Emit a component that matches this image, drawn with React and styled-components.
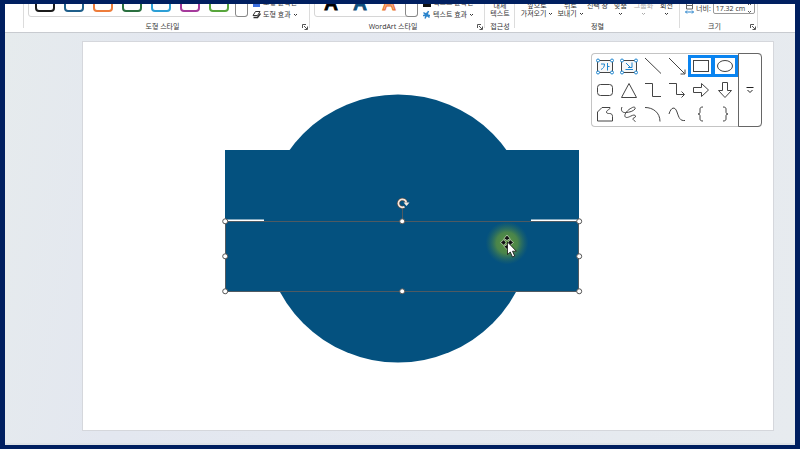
import * as React from 'react'
import styled, { createGlobalStyle } from 'styled-components'

const OUTLINES = ['#1b1b1b', '#1f5f8b', '#ee7d3b', '#2b7040', '#2c9fd6', '#a53a9c', '#58a63c']

const LETTERS = [
  { fill: '#000', stroke: '#000' },
  { fill: '#0f4f7c', stroke: '#0f4f7c' },
  { fill: '#f6b58f', stroke: '#ea6f2a' },
]

const ARRANGE = [
  { lines: ['앞으로', '가져오기'], inline: true, width: 36 },
  { lines: ['뒤로', '보내기'], inline: true, width: 31 },
  { lines: ['선택 창'], width: 23 },
  { lines: ['맞춤'], arrow: true, width: 23 },
  { lines: ['그룹화'], arrow: true, muted: true, width: 23 },
  { lines: ['회전'], arrow: true, width: 23 },
]

const textBox = letter => (
  <>
    <rect x="4.500" y="6.500" width="15" height="12" fill="#f7f7f7" />
    <g stroke="#1f86cf">
      {letter}
      <g fill="#fff">
        <circle cx="5" cy="6.500" r="1.500" />
        <circle cx="19" cy="6.500" r="1.500" />
        <circle cx="5" cy="18.500" r="1.500" />
        <circle cx="19" cy="18.500" r="1.500" />
      </g>
    </g>
  </>
)

const SHAPES = [
  {
    name: '텍스트 상자',
    art: textBox(<path d="M8 10h3.500c0 3-1.500 4.500-3.500 5.500M14.500 9v7.500M14.500 12.500h2" />),
  },
  {
    name: '세로 텍스트 상자',
    art: textBox(<path d="M9 9l4 4M15 8.500v5h-4M8.500 15.500h7.500" />),
  },
  { name: '선', art: <path d="M4 4l16 15.500" /> },
  { name: '화살표', art: <path d="M4 4l15.500 15.500M20 15.500v4.500h-4.500" /> },
  { name: '직사각형', selected: true, art: <rect x="4.500" y="6.500" width="15" height="11" /> },
  { name: '타원', selected: true, art: <ellipse cx="12" cy="12" rx="7.500" ry="5.500" /> },
  { name: '둥근 사각형', art: <rect x="4.500" y="6.500" width="15" height="11" rx="3" /> },
  { name: '삼각형', art: <path d="M12 5.500L19.500 19.500h-15z" /> },
  { name: '꺾인 연결선', art: <path d="M4 5.500h7.500v13H20" /> },
  { name: '꺾인 화살표', art: <path d="M4 5.500h7.500v11H19M16.500 13.500l3 3-3 3" /> },
  { name: '오른쪽 화살표', art: <path d="M4.500 9.500h8v-4l7 6.500-7 6.500v-4h-8z" /> },
  { name: '아래쪽 화살표', art: <path d="M9.500 4.500h5v8h4L12 19.500l-6.500-7h4z" /> },
  {
    name: '자유형',
    art: (
      <path d="M4.500 19V10l4.500-4.500h8c1 1.500-3.500 2.500-3.500 4.500 0 1.500 1.500 1.500 3 1.500 2 0 3 1 3 3V19z" />
    ),
  },
  {
    name: '자유 곡선',
    art: (
      <path d="M5 5c-1.500 3 0 6 3.500 5.500 4 0 8-1.500 9.500-3.500 1-2-1.500-2.500-3.500-1C11 7.500 7 12 8 14.500c1 2 4 .5 6-.5s4-1.500 4.500 0-1.500 1.500-2.500 2.500c-.5 1.500 2 2.500 2.500 3" />
    ),
  },
  { name: '호', art: <path d="M4 5.500c8 0 15 5 15 14" /> },
  { name: '곡선', art: <path d="M4 12c2-7 6-8 8-2s3 9 8 8.500" /> },
  {
    name: '왼쪽 중괄호',
    art: <path d="M14 5c-2 0-3 .5-3 2v3c0 1.200-.5 2-2 2 1.500 0 2 .8 2 2v3c0 1.500 1 2 3 2" />,
  },
  {
    name: '오른쪽 중괄호',
    art: <path d="M10 5c2 0 3 .5 3 2v3c0 1.200.5 2 2 2-1.500 0-2 .8-2 2v3c0 1.500-1 2-3 2" />,
  },
]

const HANDLES = [
  [225, 221],
  [402, 221],
  [579, 221],
  [225, 256],
  [579, 256],
  [225, 291],
  [402, 291],
  [579, 291],
]

const Chevron = () => (
  <Arrow viewBox="0 0 5 4" aria-hidden="true">
    <path d="M1 1l1.500 1.500L4 1" fill="none" stroke="currentColor" />
  </Arrow>
)

const Launcher = ({ label }) => (
  <LauncherButton aria-label={label}>
    <svg width="6" height="6" viewBox="0 0 6 6" fill="none" stroke="#555">
      <path d="M.5 4V.5H4M2 2l3 3M5.500 2.500v3h-3" />
    </svg>
  </LauncherButton>
)

const ShapeStyles = () => (
  <Group>
    <GroupBody>
      <Gallery>
        {OUTLINES.map(color => (
          <Swatch key={color} $color={color} aria-label="도형 스타일" />
        ))}
        <GalleryMore aria-label="자세히" />
      </Gallery>
      <Commands>
        <Command>
          <svg width="9" height="9" viewBox="0 0 9 9">
            <path d="M1 7.500h7" stroke="#3b6fe0" strokeWidth="3" />
          </svg>
          도형 윤곽선 <Chevron />
        </Command>
        <Command>
          <svg width="9" height="9" viewBox="0 0 9 9" fill="none" stroke="#333">
            <path d="M3.500 1.500h4.500l-2.500 4h-4.500z" />
            <path d="M1.500 7.500h4l3-4" strokeWidth="1.500" />
          </svg>
          도형 효과 <Chevron />
        </Command>
      </Commands>
    </GroupBody>
    <Caption $launcher>도형 스타일</Caption>
    <Launcher label="도형 스타일 옵션" />
  </Group>
)

const WordArtStyles = () => (
  <Group>
    <GroupBody>
      <Gallery>
        {LETTERS.map(l => (
          <Letter key={l.stroke} $fill={l.fill} $stroke={l.stroke}>
            A
          </Letter>
        ))}
        <GalleryMore aria-label="자세히" />
      </Gallery>
      <Commands>
        <Command>
          <svg width="9" height="9" viewBox="0 0 9 9">
            <path d="M1 7.500h8" stroke="#111" strokeWidth="3" />
          </svg>
          텍스트 윤곽선 <Chevron />
        </Command>
        <Command>
          <svg width="9" height="9" viewBox="0 0 9 9" fill="none" stroke="#2b84cc">
            <path d="M1.500 2.500l6 5M6.500 1L3 8.500M1 5.500h7" strokeWidth="1.500" />
            <circle cx="4.500" cy="4.500" r="1.500" fill="#2b84cc" />
          </svg>
          텍스트 효과 <Chevron />
        </Command>
      </Commands>
    </GroupBody>
    <Caption $launcher>WordArt 스타일</Caption>
    <Launcher label="WordArt 스타일 옵션" />
  </Group>
)

const Ribbon = () => (
  <RibbonBar>
    <Group />
    <ShapeStyles />
    <WordArtStyles />
    <Group>
      <GroupBody $center>
        <StackedButton>
          <span>대체</span>
          <span>텍스트</span>
        </StackedButton>
      </GroupBody>
      <Caption>접근성</Caption>
    </Group>
    <Group>
      <GroupBody>
        {ARRANGE.map(item => (
          <StackedButton key={item.lines[0]} $width={item.width} $muted={item.muted}>
            <span>{item.lines[0]}</span>
            <span>
              {item.lines[1]} {(item.inline || item.arrow) && <Chevron />}
            </span>
          </StackedButton>
        ))}
      </GroupBody>
      <Caption>정렬</Caption>
    </Group>
    <Group>
      <GroupBody>
        <SizeField>
          <svg width="9" height="12" viewBox="0 0 9 12" fill="none" stroke="#666">
            <path d="M1.500 1v6h6V1M1.500 3.500h6" />
            <path d="M.5 10h8M2 8.500L.5 10 2 11.500M7 8.500L8.500 10 7 11.500" stroke="#2b84cc" />
          </svg>
          <label htmlFor="shape-width">너비:</label>
          <Spinner>
            <input id="shape-width" defaultValue="17.32 cm" />
            <svg width="5" height="12" viewBox="0 0 5 12" fill="none" stroke="#555">
              <path d="M1 3l1.500-1.500L4 3M1 9l1.500 1.500L4 9" />
            </svg>
          </Spinner>
        </SizeField>
      </GroupBody>
      <Caption $launcher>크기</Caption>
      <Launcher label="크기 옵션" />
    </Group>
  </RibbonBar>
)

const Drawing = () => (
  <Canvas viewBox="82 41 692 390" role="img" aria-label="슬라이드">
    <defs>
      <radialGradient id="glow">
        <stop offset="0" stopColor="#5f953e" />
        <stop offset="0.5" stopColor="#518a45" stopOpacity="0.9" />
        <stop offset="1" stopColor="#2f7058" stopOpacity="0" />
      </radialGradient>
    </defs>
    <g fill="#04517f">
      <circle cx="398" cy="228.500" r="134" />
      <rect x="225" y="150" width="354" height="141.500" />
    </g>
    <path d="M227 220.500h37M531 220.500h47" stroke="#fff" strokeWidth="2" />
    <rect x="225.500" y="221.500" width="353" height="70" fill="none" stroke="#4f5a62" />
    <path d="M402.500 208v12" stroke="#4f5a62" />
    <g fill="#fff" stroke="#555">
      {HANDLES.map(([x, y]) => (
        <circle key={`${x}-${y}`} cx={x + 0.2} cy={y + 0.3} r="2.500" />
      ))}
    </g>
    <path d="M404.500 206.700a4 4 0 1 1 1.800-4.200" fill="none" stroke="#5b5048" strokeWidth="3" />
    <path d="M404.500 206.700a4 4 0 1 1 1.800-4.200" fill="none" stroke="#f6e9e0" strokeWidth="1.700" />
    <path d="M403.500 202.500h6l-3 3.500z" fill="#f6e9e0" />
    <circle cx="507" cy="243" r="21.500" fill="url(#glow)" />
    <g fill="#111" stroke="#c3d8bd" strokeWidth="0.800">
      <path d="M507 235l3 3.500-3 2-3-2zM500.500 242.500l3.500-3 2 3-2 3zM513.500 242.500l-3.500-3-2 3 2 3zM507 249.500l-3-3 3-2 3 2z" />
    </g>
    <path
      d="M507.500 242v12.500l2.800-2.500 2.200 5 2.200-1-2.200-4.800h3.800z"
      fill="#fff"
      stroke="#111"
      strokeWidth="0.800"
    />
  </Canvas>
)

const ShapePalette = () => (
  <Palette>
    <ShapeGrid>
      {SHAPES.map(shape => (
        <ShapeButton key={shape.name} aria-label={shape.name} $selected={shape.selected}>
          <svg width="24" height="24" viewBox="0 0 24 24" fill="none" stroke="#444">
            {shape.art}
          </svg>
        </ShapeButton>
      ))}
    </ShapeGrid>
    <PaletteMore aria-label="도형 더 보기">
      <svg width="8" height="8" viewBox="0 0 8 8" fill="none" stroke="#222">
        <path d="M.5 1.500h7M1.500 4L4 6.500 6.500 4" />
      </svg>
    </PaletteMore>
  </Palette>
)

const App = () => (
  <Frame>
    <GlobalStyle />
    <Ribbon />
    <Workspace>
      <Drawing />
      <ShapePalette />
    </Workspace>
  </Frame>
)

const GlobalStyle = createGlobalStyle`
  * {
    box-sizing: border-box;
  }
  body {
    margin: 0;
    font-family: 'Open Sans', 'Noto Sans CJK KR', sans-serif;
    font-size: 7px;
    color: #333;
  }
  button, input {
    font: inherit;
    color: inherit;
    padding: 0;
    border: 0;
    background: none;
  }
  svg {
    display: block;
    flex: none;
  }
`

const Frame = styled.div`
  display: flex;
  flex-direction: column;
  min-height: 100vh;
  border: solid 5px #001f60;
  border-top-width: 4px;
`

const RibbonBar = styled.header`
  display: grid;
  grid-template-columns: 19fr 286fr 175fr 30fr 165fr 78fr 37fr;
  height: 29px;
  overflow: hidden;
  background: white;
  border-bottom: solid 1px #c8cbd0;
`

const Group = styled.section`
  position: relative;
  display: flex;
  flex-direction: column;
  justify-content: flex-end;
  min-width: 0;
  height: 28px;
  background: linear-gradient(#dcdcdc, #dcdcdc) right top / 1px 24px no-repeat;
`

const GroupBody = styled.div`
  display: flex;
  align-items: flex-end;
  justify-content: ${p => (p.$center ? 'center' : 'flex-start')};
  padding: 0 4px;
`

const Caption = styled.div`
  height: 11px;
  padding-right: ${p => (p.$launcher ? '9px' : '0')};
  line-height: 11px;
  text-align: center;
  white-space: nowrap;
`

const LauncherButton = styled.button`
  position: absolute;
  right: 2px;
  bottom: 2px;
`

const Gallery = styled.div`
  display: flex;
  align-items: flex-end;
  gap: 9px;
  height: 24px;
  margin-bottom: 4px;
  padding: 0 0 4px 6px;
  border: solid 1px #d6d6d6;
  border-radius: 3px;
`

const Swatch = styled.button`
  width: 20px;
  height: 18px;
  border: solid 2px ${p => p.$color};
  border-radius: 4px;
`

const Letter = styled.button`
  width: 20px;
  height: 18px;
  line-height: 16px;
  font-family: 'Open Sans', sans-serif;
  font-size: 19px;
  font-weight: 600;
  color: ${p => p.$fill};
  -webkit-text-stroke: 1px ${p => p.$stroke};
`

const GalleryMore = styled.button`
  width: 13px;
  height: 24px;
  margin: 0 -1px -5px -3px;
  border: solid 1px #888;
  border-radius: 0 0 3px 3px;
`

const Commands = styled.div`
  display: flex;
  flex-direction: column;
  gap: 1px;
  padding: 0 0 1px 4px;
`

const Command = styled.button`
  display: flex;
  align-items: center;
  gap: 2px;
  height: 11px;
  line-height: 11px;
  white-space: nowrap;
`

const Arrow = styled.svg`
  display: inline-block;
  width: 5px;
  height: 4px;
  vertical-align: middle;
`

const StackedButton = styled.button`
  display: flex;
  flex-direction: column;
  align-items: center;
  flex: none;
  width: ${p => (p.$width ? `${p.$width}px` : 'auto')};
  margin-bottom: 3px;
  color: ${p => (p.$muted ? '#aaa' : 'inherit')};
  span {
    height: 8px;
    line-height: 8px;
    white-space: nowrap;
  }
`

const SizeField = styled.div`
  display: flex;
  align-items: center;
  gap: 2px;
  margin-bottom: 7px;
  padding-left: 1px;
  white-space: nowrap;
`

const Spinner = styled.div`
  display: flex;
  align-items: center;
  width: 42px;
  height: 12px;
  padding: 0 2px;
  border: solid 1px #999;
  border-radius: 2px;
  input {
    flex: 1;
    min-width: 0;
    outline: 0;
  }
`

const Workspace = styled.main`
  position: relative;
  flex: 1;
  padding: 8px 21px 12px 77px;
  border-bottom: solid 2px #dde2e7;
  background: linear-gradient(100deg, #e6ebed, #e3e7f0 20%, #e7ebef);
`

const Canvas = styled.svg`
  width: 100%;
  background: white;
  box-shadow: inset 0 0 0 1px #d5d7dc;
`

const Palette = styled.div`
  position: absolute;
  top: 20px;
  right: 33px;
  display: flex;
  background: white;
  border: solid 1px #c4c4c4;
  border-right: 0;
  border-radius: 4px;
`

const ShapeGrid = styled.div`
  display: grid;
  grid-template-columns: repeat(6, 24px);
  grid-auto-rows: 24px;
  align-items: center;
  padding: 0 1px;
`

const ShapeButton = styled.button`
  display: flex;
  align-items: center;
  height: 20px;
  box-shadow: ${p => (p.$selected ? 'inset 0 0 0 2px #0a84f0, 0 0 0 1px #0a84f0' : 'none')};
`

const PaletteMore = styled.button`
  display: flex;
  align-items: center;
  justify-content: center;
  width: 24px;
  margin: -1px 0;
  border: solid 1px #666;
  border-radius: 0 4px 4px 0;
`

export default App
